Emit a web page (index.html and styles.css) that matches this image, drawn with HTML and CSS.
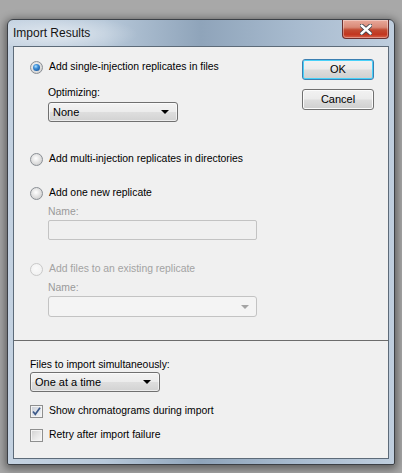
FILE: index.html
```html
<!DOCTYPE html>
<html>
<head>
<meta charset="utf-8">
<link rel="stylesheet" href="styles.css">
</head>
<body>
<div class="window">
  <div class="titlebar">
    <span class="title">Import Results</span>
    <div class="close">
      <svg width="12" height="11" viewBox="0 0 12 11">
        <path d="M1.5 1.5 L10.5 9.5 M10.5 1.5 L1.5 9.5" stroke="#3a3f48" stroke-width="4.2" stroke-linecap="round"/>
        <path d="M1.5 1.5 L10.5 9.5 M10.5 1.5 L1.5 9.5" stroke="#ffffff" stroke-width="2.4" stroke-linecap="round"/>
      </svg>
    </div>
  </div>
  <div class="frame">
    <div class="client">
      <div class="top">
        <div class="options">
          <div class="opt"><span class="radio checked"></span><span class="txt">Add single-injection replicates in files</span></div>
          <div class="sub">
            <div class="lbl">Optimizing:</div>
            <div class="combo"><span>None</span><span class="arrow"></span></div>
          </div>
          <div class="opt opt2"><span class="radio"></span><span class="txt">Add multi-injection replicates in directories</span></div>
          <div class="opt opt3"><span class="radio"></span><span class="txt">Add one new replicate</span></div>
          <div class="sub">
            <div class="lbl lbl-name dim">Name:</div>
            <div class="textbox"></div>
          </div>
          <div class="opt opt4 disabled"><span class="radio"></span><span class="txt">Add files to an existing replicate</span></div>
          <div class="sub">
            <div class="lbl lbl-name dim">Name:</div>
            <div class="combo combo-disabled"><span></span><span class="arrow"></span></div>
          </div>
        </div>
        <div class="buttons">
          <div class="btn default">OK</div>
          <div class="btn">Cancel</div>
        </div>
      </div>
      <div class="bottom">
        <div class="lbl lbl-files">Files to import simultaneously:</div>
        <div class="combo"><span>One at a time</span><span class="arrow"></span></div>
        <div class="chk chk1"><span class="box checked">
          <svg width="11" height="11" viewBox="0 0 11 11"><path d="M2 5.5 L4.3 8.3 L9 1.8" fill="none" stroke="#3d5a8a" stroke-width="1.7"/></svg>
        </span><span class="txt">Show chromatograms during import</span></div>
        <div class="chk chk2"><span class="box"></span><span class="txt">Retry after import failure</span></div>
      </div>
    </div>
  </div>
</div>
</body>
</html>
```

FILE: styles.css
```css
html, body {
  margin: 0;
  padding: 0;
}
body {
  background: #a8a8a8;
  width: 402px;
  height: 473px;
  overflow: hidden;
  font-family: "Liberation Sans", Arial, sans-serif;
  font-size: 10.4px;
  color: #000;
}
.window {
  margin: 19px 0 0 7px;
  width: 386px;
  height: 444px;
  border: 1px solid #3c4046;
  border-radius: 6px 6px 2px 2px;
  background: linear-gradient(90deg, #c4d2e1 0%, #b7c8d9 25%, #8fa4ba 50%, #a8bbcf 75%, #bfcede 100%);
  box-shadow: 0 2px 8px 2px rgba(0,0,0,0.45);
  display: flex;
  flex-direction: column;
}
.titlebar {
  height: 26px;
  display: flex;
  align-items: flex-start;
  background: radial-gradient(ellipse 80px 18px at 50px 14px, rgba(255,255,255,0.55), rgba(255,255,255,0) 100%);
  border-radius: 5px 5px 0 0;
}
.title {
  flex: 1;
  padding: 6px 0 0 5px;
  font-size: 12px;
  line-height: 15px;
  color: #151515;
}
.close {
  width: 45px;
  height: 18px;
  margin-right: 5px;
  border: 1px solid #6b3030;
  border-top: none;
  border-radius: 0 0 4px 4px;
  background: linear-gradient(#e9a99b 0%, #d98a78 40%, #c24a32 55%, #c2361f 80%, #d7614a 100%);
  display: flex;
  align-items: center;
  justify-content: center;
  box-shadow: inset 0 0 0 1px rgba(255,255,255,0.35);
}
.frame {
  flex: 1;
  padding: 0 5px 5px 5px;
  display: flex;
}
.client {
  flex: 1;
  border: 1px solid #5d6b79;
  background: #f0f0f0;
  display: flex;
  flex-direction: column;
}
.top {
  height: 293px;
  display: flex;
  padding: 12px 14px 0 16px;
  box-sizing: border-box;
}
.options {
  flex: 1;
  padding-top: 2px;
}
.opt {
  display: flex;
  align-items: center;
  height: 13px;
}
.opt .txt {
  margin-left: 6px;
  line-height: 13px;
  position: relative;
  top: -1px;
}
.opt2 { margin-top: 31px; }
.opt3 { margin-top: 21px; }
.opt4 { margin-top: 23px; }
.disabled .txt { color: #a3a3a3; }
.sub {
  margin-left: 18px;
}
.lbl {
  line-height: 13px;
  margin-top: 12px;
}
.lbl-name { margin-top: 5px; }
.dim { color: #9a9a9a; }
.radio {
  width: 11px;
  height: 11px;
  border-radius: 50%;
  border: 1px solid #8a8f95;
  background: radial-gradient(circle at 45% 40%, #ffffff 0%, #eaeaea 35%, #cfcfcf 80%, #c4c4c4 100%);
  display: flex;
  align-items: center;
  justify-content: center;
  flex: none;
}
.radio.checked::after {
  content: "";
  width: 7px;
  height: 7px;
  border-radius: 50%;
  background: radial-gradient(circle at 40% 35%, #aee2ff 0%, #3f8fd8 35%, #1d5fa6 75%, #16457c 100%);
}
.disabled .radio {
  border-color: #c9c9c9;
  background: radial-gradient(circle at 45% 40%, #fafafa, #eeeeee);
}
.combo {
  width: 116px;
  height: 18px;
  margin-top: 3px;
  border: 1px solid #707070;
  border-radius: 3px;
  background: linear-gradient(#f3f3f3 0%, #ececec 48%, #dedede 52%, #d2d2d2 100%);
  display: flex;
  align-items: center;
  justify-content: space-between;
  padding: 0 8px 0 4px;
  box-sizing: content-box;
  box-shadow: inset 0 0 0 1px rgba(255,255,255,0.6);
}
.combo span:first-child {
  line-height: 13px;
  font-size: 11px;
}
.arrow {
  width: 0;
  height: 0;
  border-left: 4px solid transparent;
  border-right: 4px solid transparent;
  border-top: 4px solid #000;
}
.combo-disabled {
  width: 196px;
  height: 19px;
  margin-top: 2px;
  border-color: #c3c3c3;
  background: #f4f4f4;
  box-shadow: none;
  padding: 0 7px 0 4px;
}
.combo-disabled .arrow {
  border-top-color: #a4a4a4;
}
.textbox {
  width: 207px;
  height: 18px;
  margin-top: 2px;
  border: 1px solid #c3c3c3;
  border-radius: 2px;
  background: #f0f0f0;
}
.buttons {
  width: 72px;
  display: flex;
  flex-direction: column;
  gap: 9px;
}
.btn {
  height: 19px;
  border: 1px solid #707070;
  border-radius: 3px;
  background: linear-gradient(#f2f2f2 0%, #ebebeb 48%, #dddddd 52%, #cfcfcf 100%);
  box-shadow: inset 0 0 0 1px #fbfbfb;
  display: flex;
  align-items: center;
  justify-content: center;
  font-size: 11px;
  line-height: 13px;
}
.btn.default {
  border-color: #3c7fb1;
  box-shadow: inset 0 0 0 1px #48d1f9;
}
.bottom {
  flex: 1;
  border-top: 1px solid #6c6c6c;
  padding: 17px 0 0 16px;
}
.lbl-files {
  margin-top: 0;
}
.bottom .combo {
  margin-top: 1px;
}
.chk {
  display: flex;
  align-items: center;
  height: 13px;
}
.chk1 { margin-top: 13px; }
.chk2 { margin-top: 11px; }
.chk .txt {
  margin-left: 6px;
  line-height: 13px;
  position: relative;
  top: -1px;
}
.box {
  width: 11px;
  height: 11px;
  border: 1px solid #8e8f8f;
  background: linear-gradient(135deg, #d0d0d0 0%, #e6e6e6 50%, #f8f8f8 100%);
  box-shadow: inset 0 0 0 1px #f4f4f4;
  display: flex;
  align-items: center;
  justify-content: center;
  flex: none;
}
.box.checked {
  background: linear-gradient(135deg, #c8ccd4 0%, #e0e4ea 50%, #f4f6f8 100%);
}
```
